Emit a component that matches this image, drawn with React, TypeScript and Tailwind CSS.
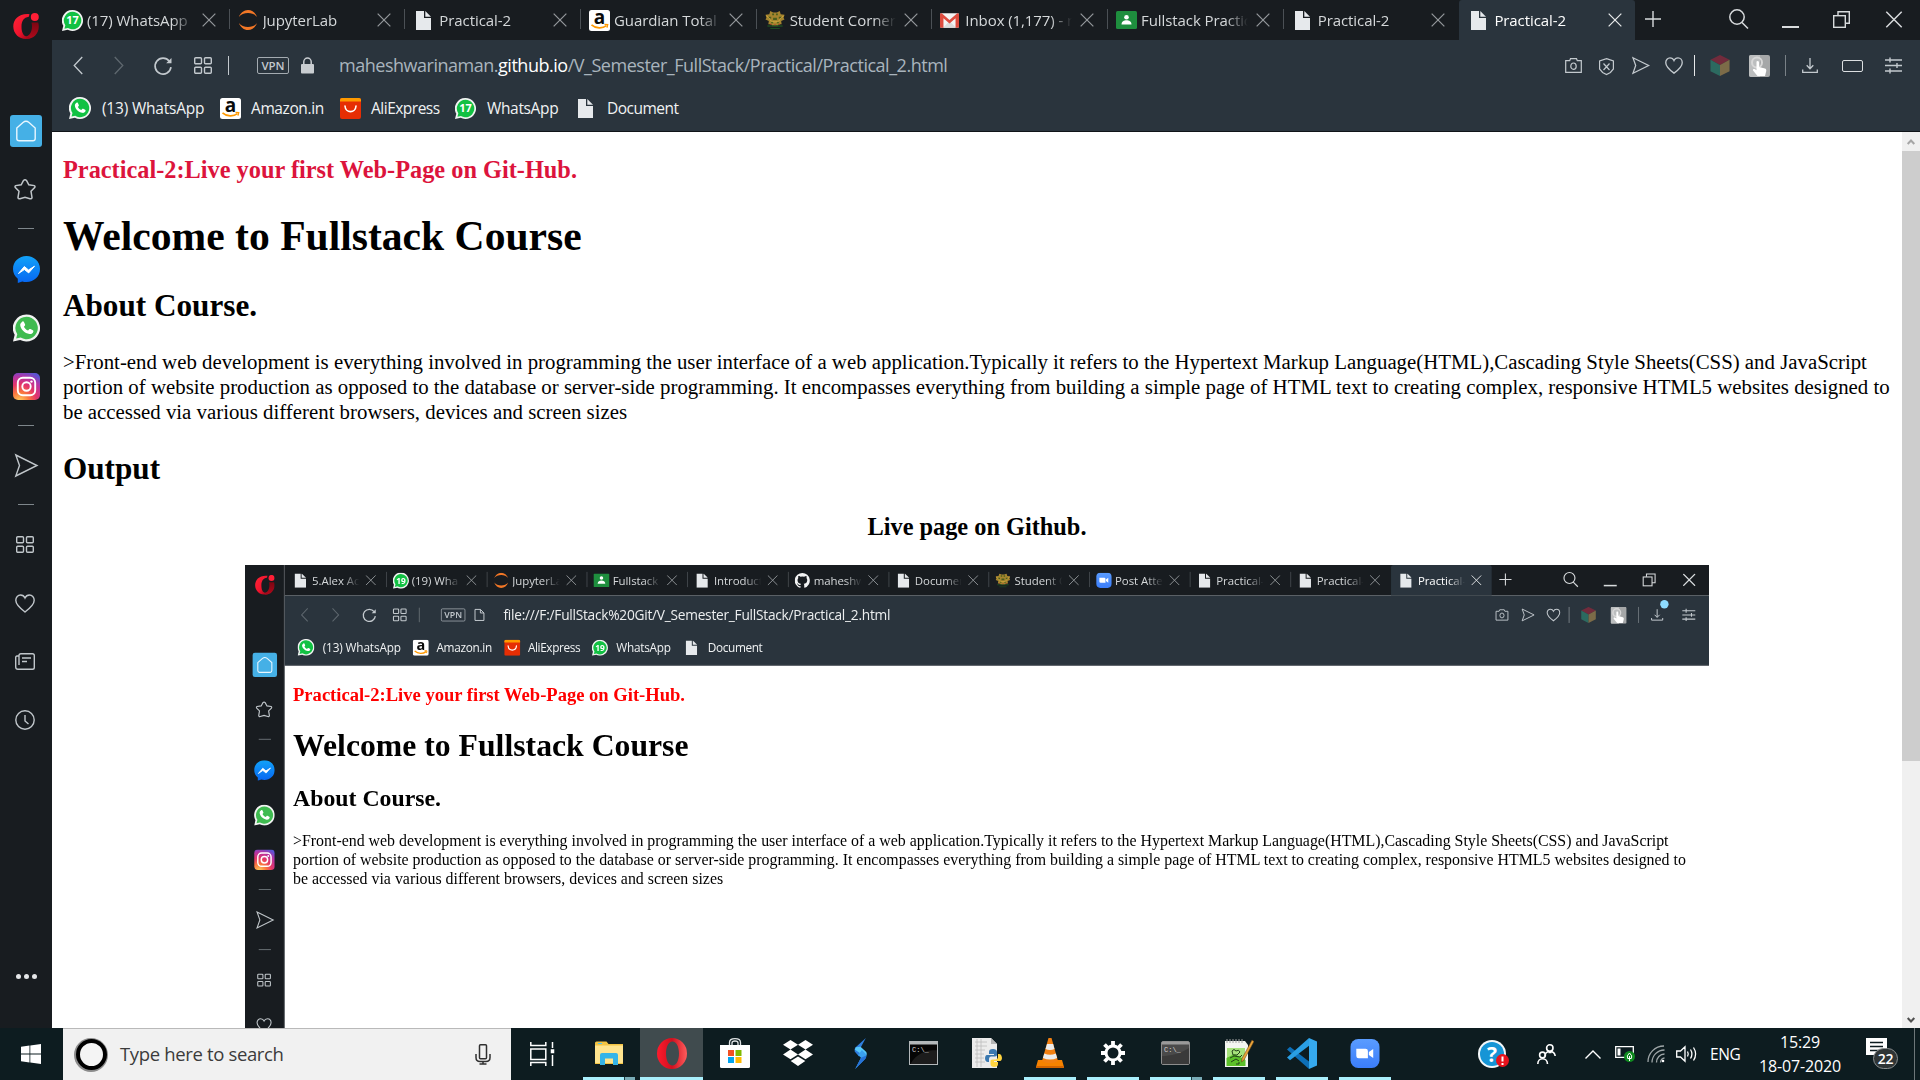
import React from "react";

type P = { className?: string };

const UI = "font-['Open_Sans','Noto_Sans',sans-serif]";

/* ---------- icons ---------- */
const OperaGX = ({ className = "" }: P) => (
  <svg viewBox="0 0 26 26" className={className}>
    <defs>
      <linearGradient id="gx" x1="0" y1="0" x2="1" y2="1">
        <stop offset="0" stopColor="#ff2436" />
        <stop offset=".55" stopColor="#f0142e" />
        <stop offset="1" stopColor="#8c0414" />
      </linearGradient>
      <linearGradient id="gx2" x1="0" y1="0" x2="0" y2="1">
        <stop offset="0" stopColor="#7c0512" />
        <stop offset="1" stopColor="#b00a1c" />
      </linearGradient>
    </defs>
    <path fill="url(#gx2)" d="M18.500 9.500h6.700c.4 1.300.6 2.600.6 4C25.800 20.500 20.500 26 13.500 26l-.5-2.500c3.800-1 6-5 6-10 0-1.500-.2-2.800-.5-4Z" />
    <path fill="url(#gx)" d="M16.500 1.200C6 .2.300 6.500.3 13.500.3 20.500 6 26 13 26c1.500 0 3-.3 4.300-.8-1.300-1-2.600-1.500-4-1.700-3-.6-4.800-4.500-4.800-9.700 0-5.800 2.300-9.300 7.300-10Z" />
    <circle cx="21.800" cy="4" r="4" fill="#ff1f36" />
  </svg>
);
const WhatsApp = ({ className = "", n, flat }: P & { n?: string; flat?: boolean }) => (
  <svg viewBox="0 0 24 24" className={className}>
    <path fill="#f1f3f2" d="M12 0a12 12 0 1 1-5.600 22.600L0 24l1.500-6A12 12 0 0 1 12 0Z" />
    <path fill={flat ? "#3fbb50" : "#12c143"} d="M12 2a10 10 0 1 1-5.200 18.500L2.800 21.400l1-3.900A10 10 0 0 1 12 2Z" />
    {n ? (
      <text x="12" y="16.500" textAnchor="middle" fontSize="12.500" fontWeight="700" fill="#fff" fontFamily="Open Sans">{n}</text>
    ) : (
      <path fill="#fff" d="M8.200 6.400c.5-.5 1.200-.4 1.500.2l1 2c.2.500.1.900-.2 1.300l-.8.9c.9 1.700 2 2.700 3.700 3.500l1-1.100c.3-.4.7-.5 1.100-.3l2.100 1c.5.2.6.600.5 1.100-.4 1.700-2 2.500-3.500 2.300-4.200-.6-8-4.300-8.200-8 0-1.200.8-2.200 1.800-2.900Z" />
    )}
  </svg>
);
const Jupyter = ({ className = "" }: P) => (
  <svg viewBox="0 0 24 24" className={className} fill="#f37726">
    <path d="M1 8.500C3 3.500 7 0 12 0s9 3.500 11 8.500C20.500 5.300 16.500 3.700 12 3.700S3.500 5.300 1 8.500Z" />
    <path d="M1 15.500C3 20.500 7 24 12 24s9-3.500 11-8.500c-2.500 3.200-6.500 4.800-11 4.800S3.500 18.700 1 15.500Z" />
  </svg>
);
const Doc = ({ className = "" }: P) => (
  <svg viewBox="0 0 15 19" className={className}>
    <path fill="#e6e9ec" d="M0 0h8v7h7v12H0Z" />
    <path fill="#e6e9ec" d="M9.300 0 15 5.700H9.300Z" />
  </svg>
);
const Amazon = ({ className = "" }: P) => (
  <svg viewBox="0 0 21 21" className={className}>
    <rect width="21" height="21" rx="2.500" fill="#fff" />
    <text x="10.500" y="13.800" textAnchor="middle" fontSize="19" fontWeight="700" fill="#0a0a0a" fontFamily="Open Sans">a</text>
    <path d="M2.500 14.800c4.500 4 11 4 15 .8" fill="none" stroke="#f90" strokeWidth="1.700" />
    <path d="M15.500 14.400l3.200.2-.7 3" fill="none" stroke="#f90" strokeWidth="1.300" />
  </svg>
);
const Ali = ({ className = "" }: P) => (
  <svg viewBox="0 0 21 21" className={className}>
    <rect width="21" height="21" rx="2" fill="#e62e04" />
    <path d="M0 3.500V2a2 2 0 0 1 2-2h17a2 2 0 0 1 2 2v1.500Z" fill="#ff9a00" />
    <path d="M5 8c.5 7.500 10.500 7.500 11 0" fill="none" stroke="#fff" strokeWidth="1.600" strokeLinecap="round" />
  </svg>
);
const Crest = ({ className = "" }: P) => (
  <svg viewBox="0 0 20 20" className={className}>
    <path fill="#a5852f" d="M5 0 8 1.500h4L15 0l1 3.500 4 .5-1 3 1 2-3.500 1.500L17 14h-3l-1 2H7l-1-2H3l.5-3.500L0 9l1-2-1-3 4-.5Z" />
    <path d="M7 2.500h2v2H7zM11 2.500h2v2h-2zM3 6h3v2H3zM14 6h3v2h-3zM8 7h4v2.500H8zM6 11h2v2H6zM12 11h2v2h-2z" fill="#4c5f1c" />
    <path d="M5 10c2 2 8 2 10 0M1 5l4 4M19 5l-4 4" stroke="#d8ac40" fill="none" />
    <path d="M2 15h16v1.500H2zM5 18h10v1H5z" fill="#1d4a22" />
    <path d="M5 13.500h1.200v1H5zM9.300 14h1.400v1H9.300zM14 13.500h1.200v1H14z" fill="#c03a2b" />
  </svg>
);
const Gmail = ({ className = "" }: P) => (
  <svg viewBox="0 0 22 17" className={className}>
    <rect width="22" height="17" rx="1.500" fill="#f4f4f4" />
    <path d="M3.500 17 11 9l7.500 8Z" fill="#dcdcdc" />
    <path d="M0 1.500C0 .5 1 0 2 0l9 8 9-8c1 0 2 .5 2 1.500v14c0 1-.7 1.500-1.500 1.500H18V6l-7 6-7-6v11H1.500C.7 17 0 16.500 0 15.500Z" fill="#dd4b3e" />
  </svg>
);
const Classroom = ({ className = "" }: P) => (
  <svg viewBox="0 0 21 18" className={className}>
    <rect width="21" height="18" rx="1.500" fill="#1e8e3e" />
    <circle cx="10.500" cy="6.200" r="2.300" fill="#fff" />
    <path d="M5.500 13.500c0-3 2.500-4.300 5-4.300s5 1.300 5 4.300Z" fill="#fff" />
  </svg>
);
const Octo = ({ className = "" }: P) => (
  <svg viewBox="0 0 24 24" className={className}>
    <path fill="#f2f3f4" d="M12 .5a12 12 0 0 0-3.800 23.400c.6.1.8-.3.8-.6v-2.100c-3.300.7-4-1.600-4-1.600-.5-1.400-1.300-1.800-1.300-1.800-1.100-.7.100-.7.100-.7 1.200.1 1.800 1.200 1.800 1.200 1.100 1.800 2.800 1.300 3.500 1 .1-.8.400-1.300.8-1.600-2.700-.3-5.500-1.300-5.500-5.900 0-1.300.5-2.400 1.200-3.200-.1-.3-.5-1.500.1-3.200 0 0 1-.3 3.300 1.200a11.500 11.500 0 0 1 6 0c2.300-1.500 3.300-1.200 3.300-1.200.7 1.700.2 2.900.1 3.200.8.800 1.200 1.900 1.200 3.200 0 4.600-2.800 5.600-5.500 5.900.4.4.8 1.100.8 2.200v3.300c0 .3.200.7.800.6A12 12 0 0 0 12 .5Z" />
  </svg>
);
const ZoomApp = ({ className = "" }: P) => (
  <svg viewBox="0 0 30 30" className={className}>
    <defs>
      <linearGradient id="zm" x1="0" y1="0" x2="0" y2="1">
        <stop offset="0" stopColor="#5a9cff" />
        <stop offset="1" stopColor="#3b7dfa" />
      </linearGradient>
    </defs>
    <rect width="30" height="30" rx="8" fill="url(#zm)" />
    <path d="M6 10h9.500a2.500 2.500 0 0 1 2.500 2.500V20H8.500A2.500 2.500 0 0 1 6 17.500ZM19 13.500l4.500-3.200v9.400L19 16.500Z" fill="#fff" />
  </svg>
);
const Cross = ({ className = "" }: P) => (
  <svg viewBox="0 0 15 15" className={className}>
    <path d="M.7.7l13.600 13.600M14.300.7.7 14.300" stroke="currentColor" strokeWidth="1.300" fill="none" />
  </svg>
);
const Line = ({ className = "", box, d, w = 1.4, children }: P & { box: string; d?: string; w?: number; children?: React.ReactNode }) => (
  <svg viewBox={box} className={"shrink-0 overflow-visible " + className} fill="none" stroke="currentColor" strokeWidth={w}>
    {d && <path d={d} />}
    {children}
  </svg>
);
const SEND = "M.8 1 22 11.500.8 22 4.500 11.500Z";
const HEART = "M10 18C4 13.500.8 10.500.8 6.300.8 3.200 3 1 5.500 1 7.500 1 9.200 2.200 10 4c.8-1.800 2.500-3 4.500-3 2.500 0 4.700 2.200 4.700 5.300C19.200 10.500 16 13.500 10 18Z";
const Grid4 = ({ className = "" }: P) => (
  <Line box="0 0 18 17" className={className}>
    <rect x=".7" y=".7" width="6.800" height="6" rx="1" />
    <rect x="10.500" y=".7" width="6.800" height="6" rx="1" />
    <rect x=".7" y="10.200" width="6.800" height="6" rx="1" />
    <rect x="10.500" y="10.200" width="6.800" height="6" rx="1" />
  </Line>
);
const Messenger = ({ className = "" }: P) => (
  <svg viewBox="0 0 27 27" className={className}>
    <defs>
      <linearGradient id="ms" x1="0" y1="0" x2="0" y2="1">
        <stop offset="0" stopColor="#12a2f8" />
        <stop offset="1" stopColor="#0666f2" />
      </linearGradient>
    </defs>
    <path d="M13.500 0C21 0 27 5.500 27 13s-6 13-13.500 13c-1.500 0-3-.2-4.200-.6L4.800 27v-4.300C1.800 20.300 0 17 0 13 0 5.500 6 0 13.500 0Z" fill="url(#ms)" />
    <path d="M5.500 17.500 11.300 10.500 15.500 14l6-3.800-5.800 6.700-4.300-3.400Z" fill="#fff" stroke="#fff" strokeWidth="1" strokeLinejoin="round" />
  </svg>
);
const Insta = ({ className = "" }: P) => (
  <svg viewBox="0 0 27 27" className={className}>
    <defs>
      <radialGradient id="ig" cx=".25" cy="1.050" r="1.150">
        <stop offset="0" stopColor="#ffd35e" />
        <stop offset=".3" stopColor="#f9763e" />
        <stop offset=".55" stopColor="#e3356a" />
        <stop offset=".8" stopColor="#b434a6" />
        <stop offset="1" stopColor="#5b54d3" />
      </radialGradient>
    </defs>
    <rect width="27" height="27" rx="5" fill="url(#ig)" />
    <rect x="4.800" y="4.800" width="17.400" height="17.400" rx="5" fill="none" stroke="#fff" strokeWidth="1.900" />
    <circle cx="13.500" cy="13.500" r="4.200" fill="none" stroke="#fff" strokeWidth="1.900" />
    <circle cx="18.500" cy="8.600" r="1.200" fill="#fff" />
  </svg>
);
const Cube = ({ className = "" }: P) => (
  <svg viewBox="0 0 20 22" className={className}>
    <path d="M10 0l10 5-10 5.500L0 5Z" fill="#722b3c" />
    <path d="M0 5l10 5.500V22L0 17Z" fill="#2c6a60" />
    <path d="M20 5l-10 5.500V22l10-5Z" fill="#7c6b48" />
  </svg>
);
const Hand = ({ className = "" }: P) => (
  <svg viewBox="0 0 21 22" className={className}>
    <rect width="21" height="22" rx="2" fill="#a5a7a8" />
    <path d="M0 2a2 2 0 0 1 2-2h9v22H2a2 2 0 0 1-2-2Z" fill="#bcbebf" />
    <circle cx="8" cy="7.500" r="5" fill="none" stroke="#d8d8d8" strokeWidth="2" />
    <path d="M7.500 6.500c1-1 2.500-.5 2.500 1V12l6 1.500c1.500.5 1.500 2 1 3.500l-1 4H8.500L4 15.500c-.6-1.400 1-2 2-1.200l1.500 1Z" fill="#fff" />
  </svg>
);

/* ---------- browser chrome ---------- */
type Tab = { icon: string; label: string; active?: boolean };
const isWide = (i: string) => i !== "doc";
function Fav({ kind, n }: { kind: string; n: string }) {
  switch (kind) {
    case "wa": return <WhatsApp n={n} className="w-[21px] h-[21px]" />;
    case "jup": return <Jupyter className="w-[20px] h-[20px]" />;
    case "amz": return <Amazon className="w-[21px] h-[21px]" />;
    case "crest": return <Crest className="w-[20px] h-[19px]" />;
    case "gm": return <Gmail className="w-[19px] h-[15px]" />;
    case "cls": return <Classroom className="w-[21px] h-[18px]" />;
    case "oct": return <Octo className="w-[20px] h-[20px]" />;
    case "zm": return <ZoomApp className="w-[21px] h-[20px]" />;
    default: return <Doc className="w-[15px] h-[19px]" />;
  }
}

function TabStrip({ tabs, n }: { tabs: Tab[]; n: string }) {
  return (
    <div className="flex h-[40px] bg-[#181c20] pl-px text-[#d5d8da]">
      <div className="flex w-[1582px]">
        {tabs.map((t, i) => (
          <div
            key={i}
            className={
              "relative flex min-w-0 flex-1 items-center pr-[13px] " +
              (t.active ? "ml-px rounded-t-[3px] bg-[#2a343d] text-white" : "")
            }
          >
            {i > 0 && !t.active && <div className="absolute top-[9px] left-0 h-[20px] w-px bg-[#4b5055]" />}
            <div className={"flex h-full shrink-0 items-center " + (isWide(t.icon) ? "w-[34px] pl-[9px]" : "w-[35px] pl-[12px]")}>
              <Fav kind={t.icon} n={n} />
            </div>
            <div className={"min-w-0 flex-1 overflow-hidden pb-px text-[15px] leading-[24px] tracking-[-0.08px] whitespace-nowrap [mask-image:linear-gradient(to_right,black_calc(100%-22px),transparent)] " + UI}>
              {t.label}
            </div>
            <Cross className={"ml-[8px] h-[14px] w-[14px] shrink-0 " + (t.active ? "text-[#e8eaeb]" : "text-[#94989b]")} />
          </div>
        ))}
      </div>
      <div className="flex flex-1 items-start text-[#d8dbdd]">
        <Line box="0 0 16 16" d="M8 0v16M0 8h16" className="mt-[11px] ml-[10px] h-[16px] w-[16px]" />
        <Line box="0 0 20 20" w={1.5} className="mt-[9px] ml-[68px] h-[20px] w-[20px]">
          <circle cx="8" cy="8" r="7.200" />
          <path d="M13 13.500l6 6" />
        </Line>
        <div className="mt-[26px] ml-[33px] h-[1.500px] w-[17px] bg-[#d8dbdd]" />
        <Line box="0 0 17 17" className="mt-[11px] ml-[34px] h-[17px] w-[17px]">
          <rect x=".7" y="4.700" width="11.600" height="11.600" />
          <path d="M5 4.500V.7h11.300v11.600h-4" />
        </Line>
        <Cross className="mt-[11px] ml-[35px] h-[17px] w-[18px]" />
      </div>
    </div>
  );
}

const Camera = ({ className = "" }: P) => (
  <Line box="0 0 17 15" w={1.2} className={className}>
    <path d="M.7 2.700h4L5.500.7h6l.8 2h4v11.600H.7Z" />
    <ellipse cx="8.500" cy="8.200" rx="2.700" ry="3.200" />
  </Line>
);
const Sliders = ({ className = "" }: P) => (
  <Line box="0 0 17 15" w={1.4} className={className} d="M0 2h17M0 7.500h17M0 13h17M5-.5v5M12 5v5M5 10.500v5" />
);
const Download = ({ className = "" }: P) => (
  <Line box="0 0 16 15" w={1.3} className={className} d="M8 0v10.500M4.700 7.300 8 10.700l3.300-3.400M.7 11.500v2.800h14.600v-2.800" />
);

function Toolbar({ inner }: { inner?: boolean }) {
  return (
    <div className="flex h-[51px] items-center text-[#c3c9ce]">
      <Line box="0 0 10 18" d="M9.500 0 1 9l8.500 9" className={"ml-[21px] h-[17px] w-[10px] " + (inner ? "text-[#5e676e]" : "")} />
      <Line box="0 0 10 18" d="M.5 0 9 9 .5 18" className="ml-[31px] h-[17px] w-[10px] text-[#5e676e]" />
      <Line box="0 0 17 17" w={1.6} className="ml-[30px] h-[18px] w-[18px]">
        <path d="M14.500 4A7.500 7.500 0 1 0 16 9.500" />
        <path d="M16.500 1v5h-5Z" fill="currentColor" stroke="none" />
      </Line>
      <Grid4 className="ml-[22px] h-[17px] w-[18px]" />
      <div className={"ml-[16px] h-[19px] w-px " + (inner ? "bg-[#70787e]" : "bg-[#c3c9ce]")} />
      <div className={"ml-[28px] flex h-[17px] w-[32px] items-center justify-center rounded-[2px] border border-[#a4abb1] text-[11.500px] leading-none font-semibold " + UI}>VPN</div>
      {inner ? (
        <Line box="0 0 14 17" className="ml-[12px] h-[17px] w-[13px]" d="M.7.7h7.600l5 5v10.600H.7ZM8.300.7v5h5" />
      ) : (
        <svg viewBox="0 0 14 17" className="ml-[12px] h-[17px] w-[13px]">
          <rect y="7" width="14" height="10" rx="1" fill="#c9cdd1" />
          <path d="M3 8V4.500a4 4 0 0 1 8 0V8" fill="none" stroke="#c9cdd1" strokeWidth="1.600" />
        </svg>
      )}
      <div className={"ml-[25px] w-[900px] pb-px text-[18px] leading-[26px] whitespace-nowrap " + UI + (inner ? " tracking-[-0.34px] text-[#eceeef]" : " tracking-[-0.48px] text-[#a9b4bd]")}>
        {inner ? (
          "file:///F:/FullStack%20Git/V_Semester_FullStack/Practical_2.html"
        ) : (
          <>maheshwarinaman.<span className="text-white">github.io</span>/V_Semester_FullStack/Practical/Practical_2.html</>
        )}
      </div>
      <div className="flex-1" />
      <Camera className="h-[15px] w-[17px]" />
      {!inner && (
        <Line box="0 0 15 17" w={1.2} className="mt-[2px] ml-[17px] h-[17px] w-[15px]" d="M7.500.6 14.400 3v8l-3 3.500-3.900 2-3.900-2-3-3.500V3ZM4.500 5.500l6 6.500M10.500 5.500l-6 6.500" />
      )}
      <Line box="0 0 22 23" w={1.7} d={SEND} className={"h-[17px] w-[17px] " + (inner ? "ml-[17px]" : "ml-[18px]")} />
      <Line box="0 0 20 19" w={1.5} d={HEART} className="ml-[16px] h-[17px] w-[18px]" />
      <div className={"ml-[11px] h-[21px] w-px " + (inner ? "bg-[#8b9298]" : "bg-[#e6e8ea]")} />
      <Cube className="ml-[15px] h-[21px] w-[20px]" />
      <Hand className="ml-[19px] h-[22px] w-[21px]" />
      <div className="ml-[15px] h-[21px] w-px bg-[#798187]" />
      <div className="relative ml-[16px]">
        <Download className="h-[15px] w-[16px]" />
        {inner && <div className="absolute -top-[12px] left-[12px] h-[11px] w-[11px] rounded-full bg-[#8edcff]" />}
      </div>
      {!inner && <div className="ml-[24px] h-[12px] w-[21px] rounded-[2px] border-[1.500px] border-[#dcdfe1]" />}
      <Sliders className={"mr-[18px] h-[15px] w-[17px] " + (inner ? "ml-[25px]" : "ml-[22px]")} />
    </div>
  );
}

function Bookmarks({ n }: { n: string }) {
  const t = "pb-px text-[15.500px] leading-[22px] whitespace-nowrap text-[#f0f2f3] " + UI;
  return (
    <div className="flex h-[34px] items-center">
      <div className="ml-[17px] w-[33px]"><WhatsApp className="h-[22px] w-[22px]" /></div>
      <div className={t + " w-[118px] tracking-[-0.2px]"}>(13) WhatsApp</div>
      <div className="w-[31px]"><Amazon className="h-[21px] w-[21px]" /></div>
      <div className={t + " w-[89px] tracking-[-0.4px]"}>Amazon.in</div>
      <div className="w-[31px]"><Ali className="h-[21px] w-[21px]" /></div>
      <div className={t + " w-[84px] tracking-[-0.5px]"}>AliExpress</div>
      <div className="w-[32px]"><WhatsApp n={n} className="h-[21px] w-[21px]" /></div>
      <div className={t + " w-[91px] tracking-[-0.35px]"}>WhatsApp</div>
      <div className="w-[29px]"><Doc className="h-[19px] w-[15px]" /></div>
      <div className={t + " tracking-[-0.5px]"}>Document</div>
    </div>
  );
}

function SideBar({ inner }: { inner?: boolean }) {
  const dash = <div className="h-px w-[16px] bg-[#7e868b]" />;
  const slot = "flex items-center justify-center ";
  return (
    <div className={"flex w-[52px] shrink-0 flex-col items-center bg-[#181c20] text-[#c0c6ca] " + (inner ? "border-r border-[#6a6f73]" : "")}>
      <OperaGX className="mt-[13px] h-[26px] w-[26px]" />
      <div className={slot + "mt-[76px] h-[32px] w-[32px] rounded-[3px] bg-[#45b0e6] text-[#e9f7ff]"}>
        <Line box="0 0 20 21" className="h-[22px] w-[20px]" d="M.8 7.500 7 2Q10-.4 13 2l6.200 5.500V18q0 2.300-2.300 2.300H3.100Q.8 20.300.8 18Z" />
      </div>
      <Line box="0 0 22 21" w={1.5} className="mt-[32px] mr-[2px] h-[21px] w-[22px]" d="M9.500 1.500q1.500-1.500 3 0l2.300 4.300 5.400.8q1.300.8.500 2L17 12.300l1 6.200q-.3 1.700-2 1.200L11 18.200l-5 1.500q-1.700.5-2-1.200l1-6.200L1.300 8.600q-.8-1.200.5-2l5.400-.8Z" />
      <div className="mt-[28px]">{dash}</div>
      <Messenger className="mt-[27px] h-[27px] w-[27px]" />
      <WhatsApp flat className="mt-[31px] h-[28px] w-[27px]" />
      <Insta className="mt-[31px] h-[27px] w-[27px]" />
      <div className="mt-[25px]">{dash}</div>
      <Line box="0 0 22 23" d={SEND} className="mt-[28px] h-[23px] w-[22px]" />
      <div className="mt-[27px]">{dash}</div>
      <Grid4 className="mt-[31px] mr-[2px] h-[17px] w-[18px]" />
      <Line box="0 0 20 19" d={HEART} className="mt-[41px] mr-[2px] h-[19px] w-[20px]" />
      <Line box="0 0 20 17" className="mt-[40px] mr-[2px] h-[17px] w-[20px]" d="M4 3H2Q.7 3 .7 4.500V14q0 2.300 2.300 2.300h14.500q1.800 0 1.800-1.800V2.500Q19.300.7 17.500.7H6Q4 .7 4 2.500V12M7 5h9M7 8.500h5" />
      <Line box="0 0 20 20" className="mt-[40px] mr-[2px] h-[20px] w-[20px]">
        <circle cx="10" cy="10" r="9.200" />
        <path d="M10 5v6l3.500 3" />
      </Line>
      <div className="mt-[244px] flex gap-[3px]">
        <div className="h-[5px] w-[5px] rounded-full bg-[#e4e6e8]" />
        <div className="h-[5px] w-[5px] rounded-full bg-[#e4e6e8]" />
        <div className="h-[5px] w-[5px] rounded-full bg-[#e4e6e8]" />
      </div>
    </div>
  );
}

function Article({ inner }: { inner?: boolean }) {
  return (
    <>
      <h3 className={"mt-[24px] text-[24.340px] leading-[28px] font-bold " + (inner ? "text-[#ff0000]" : "text-[#dc143c]")}>Practical-2:Live your first Web-Page on Git-Hub.</h3>
      <h1 className="mt-[28px] text-[41.600px] leading-[48px] font-bold">Welcome to Fullstack Course</h1>
      <h2 className="mt-[28px] text-[31.200px] leading-[36px] font-bold">About Course.</h2>
      <div className="mt-[26px] text-[20.840px] leading-[25px] whitespace-nowrap">
        <p>&gt;Front-end web development is everything involved in programming the user interface of a web application.Typically it refers to the Hypertext Markup Language(HTML),Cascading Style Sheets(CSS) and JavaScript</p>
        <p>portion of website production as opposed to the database or server-side programming. It encompasses everything from building a simple page of HTML text to creating complex, responsive HTML5 websites designed to</p>
        <p>be accessed via various different browsers, devices and screen sizes</p>
      </div>
    </>
  );
}

const innerTabs: Tab[] = [
  { icon: "doc", label: "5.Alex Ac" },
  { icon: "wa", label: "(19) Wha" },
  { icon: "jup", label: "JupyterLa" },
  { icon: "cls", label: "Fullstack" },
  { icon: "doc", label: "Introduct" },
  { icon: "oct", label: "maheshw" },
  { icon: "doc", label: "Documen" },
  { icon: "crest", label: "Student C" },
  { icon: "zm", label: "Post Atte" },
  { icon: "doc", label: "Practical-" },
  { icon: "doc", label: "Practical-" },
  { icon: "doc", label: "Practical-", active: true },
];
const outerTabs: Tab[] = [
  { icon: "wa", label: "(17) WhatsApp" },
  { icon: "jup", label: "JupyterLab" },
  { icon: "doc", label: "Practical-2" },
  { icon: "amz", label: "Guardian Total S" },
  { icon: "crest", label: "Student Corner" },
  { icon: "gm", label: "Inbox (1,177) - n" },
  { icon: "cls", label: "Fullstack Practic" },
  { icon: "doc", label: "Practical-2" },
  { icon: "doc", label: "Practical-2", active: true },
];

function Browser({ inner }: { inner?: boolean }) {
  const n = inner ? "19" : "17";
  return (
    <div className="flex h-[1028px] w-[1920px] overflow-hidden bg-white">
      <SideBar inner={inner} />
      <div className="flex min-w-0 flex-1 flex-col">
        <TabStrip tabs={inner ? innerTabs : outerTabs} n={n} />
        <div className={"h-[92px] border-b bg-[#2a343d] " + (inner ? "border-[#5a5f64]" : "border-[#101418]")}>
          <Toolbar inner={inner} />
          <Bookmarks n={n} />
        </div>
        <div className="flex min-h-0 flex-1">
          <div className="min-w-0 flex-1 overflow-hidden pl-[11px] font-['Liberation_Serif',serif] text-black">
            <Article inner={inner} />
            {!inner && (
              <>
                <h2 className="mt-[26px] text-[31.200px] leading-[36px] font-bold">Output</h2>
                <h3 className="mt-[26px] mr-[11px] text-center text-[24.340px] leading-[28px] font-bold">Live page on Github.</h3>
                <div className="mt-[24px] ml-[182px] h-[500px] w-[1464px] overflow-hidden">
                  <div className="origin-top-left scale-[0.7625]">
                    <Browser inner />
                  </div>
                </div>
              </>
            )}
          </div>
          {!inner && (
            <div className="flex w-[18px] flex-col items-center bg-[#f0f0f0]">
              <Line box="0 0 8 6" w={2} d="M.7 5 4 1.500 7.300 5" className="mt-[7px] h-[6px] w-[8px] text-[#a6a6a6]" />
              <div className="mt-[6px] h-[610px] w-full bg-[#cdcdcd]" />
              <div className="flex-1" />
              <Line box="0 0 8 6" w={2} d="M.7 1 4 4.500 7.300 1" className="mb-[5px] h-[6px] w-[8px] text-[#505050]" />
            </div>
          )}
        </div>
      </div>
    </div>
  );
}

/* ---------- taskbar ---------- */
function Cell({ children, bar, active, split }: { children: React.ReactNode; bar?: boolean; active?: boolean; split?: boolean }) {
  return (
    <div className={"flex w-[63px] shrink-0 flex-col items-center " + (active ? "bg-[#404b4e]" : "")}>
      <div className="flex h-[49px] w-full items-center justify-center pt-px">{children}</div>
      {bar && (
        <div className={"flex h-[3px] bg-[#a9effc] " + (active ? "w-full" : "w-[52px]")}>
          {split && <div className="ml-auto h-full w-[11px] border-l border-[#1b3a40] bg-[#79acb7]" />}
        </div>
      )}
    </div>
  );
}
const Cmd = ({ grey }: { grey?: boolean }) => (
  <svg viewBox="0 0 29 24" className="h-[24px] w-[29px]">
    <rect x=".5" y=".5" width="28" height="23" rx={grey ? 1.5 : 0} fill={grey ? "#4a4a4a" : "#050505"} stroke={grey ? "#8d8d8d" : "#b3b8ba"} />
    <rect x="1" y="1" width="27" height="2.500" fill={grey ? "#9a9a9a" : "#b3b8ba"} />
    {!grey && <path d="M28 4v19H1.500C7 13 16 9 28 9Z" fill="#1c1c1c" />}
    {grey && <path d="M1 23V15c8 0 18-2 27-8v16Z" fill="#3a3a3a" />}
    <text x="3" y="10.500" fontSize="7" fill="#d5d5d5" fontFamily="Liberation Mono">C:\_</text>
  </svg>
);

function Taskbar() {
  return (
    <div className={"flex h-[52px] w-[1920px] bg-[#0d1c20] text-white " + UI}>
      <div className="flex w-[63px] items-center justify-center">
        <svg viewBox="0 0 20 20" className="mr-[2px] h-[20px] w-[20px]" fill="#fff">
          <path d="M0 2.800 8.500 1.600v8H0ZM9.300 1.500 20 0v9.600H9.300ZM0 10.400h8.500v8L0 17.200ZM9.300 10.400H20V20L9.300 18.500Z" />
        </svg>
      </div>
      <div className="flex w-[448px] items-center border-t border-[#b9b9b9] bg-[#f1f1f1]">
        <div className="ml-[11px] flex h-[34px] w-[34px] items-center justify-center rounded-full bg-[#8c8c8c]">
          <div className="h-[31px] w-[31px] rounded-full border-[4px] border-black bg-[#f4f4f4]" />
        </div>
        <div className="ml-[12px] pb-[2px] text-[18.500px] leading-[26px] tracking-[-0.35px] whitespace-nowrap text-[#3b3b3b]">Type here to search</div>
        <div className="flex-1" />
        <Line box="0 0 16 21" w={1.5} className="mr-[20px] h-[21px] w-[16px] text-[#303030]">
          <rect x="4.500" y=".8" width="7" height="14" rx="1" />
          <path d="M1 10v3.500q0 4 4 4h6q4 0 4-4V10M8 17.500V20M4.500 20h7" />
        </Line>
      </div>
      <div className="flex w-[66px] items-center justify-center pr-[4px]">
        <Line box="0 0 24 24" w={1.500} className="h-[24px] w-[24px]" d="M.8 0v3.500h15V0M.8 7h15v10.500h-15ZM.8 24v-3.500h15V24M22.500 0v6M22.500 13v11">
          <rect x="21.500" y="8" width="2" height="2.500" fill="#fff" />
        </Line>
      </div>
      <Cell bar split>
        <svg viewBox="0 0 28 24" className="h-[24px] w-[28px]">
          <path d="M0 2q0-1.500 1.500-1.500h10l2 2.500H28v20H0Z" fill="#f3c443" />
          <path d="M0 4.500h28V21q0 1-1 1H1q-1 0-1-1Z" fill="#ffe48e" />
          <path d="M3 2.500h4" stroke="#4fc3f7" />
          <path d="M5 24V14q0-2 2-2h14q2 0 2 2v10h-5v-6.500h-8V24Z" fill="#35b4e8" />
        </svg>
      </Cell>
      <Cell bar active>
        <svg viewBox="0 0 30 31" className="h-[31px] w-[30px]">
          <defs>
            <linearGradient id="op" x1="0" y1="0" x2="1" y2="0">
              <stop offset="0" stopColor="#ff1b2d" />
              <stop offset=".5" stopColor="#d0101f" />
              <stop offset="1" stopColor="#ff5c5c" />
            </linearGradient>
          </defs>
          <path fillRule="evenodd" fill="url(#op)" d="M15 0a15 15.500 0 0 1 0 31a15 15.500 0 0 1 0-31ZM15.500 3.500C11.500 3.500 9 9 9 15.500s2.500 12 6.500 12S22 22 22 15.500 19.500 3.500 15.500 3.500Z" />
        </svg>
      </Cell>
      <Cell>
        <svg viewBox="0 0 30 30" className="h-[30px] w-[30px]">
          <path d="M9.500 8V4.500q0-3.800 5.500-3.800t5.500 3.800V8M12 8V5q0-2 3-2t3 2v3" fill="none" stroke="#dfe3e4" strokeWidth="1.300" />
          <path d="M0 7h30v21.500q0 1.500-1.500 1.500h-27Q0 30 0 28.500Z" fill="#fff" />
          <path d="M8 12h6v6H8Z" fill="#f25022" /><path d="M15.500 12h6v6h-6Z" fill="#7fba00" />
          <path d="M8 19h6v6H8Z" fill="#00a4ef" /><path d="M15.500 19h6v6h-6Z" fill="#ffb900" />
        </svg>
      </Cell>
      <Cell>
        <svg viewBox="0 0 30 26" className="h-[26px] w-[30px]" fill="#fff">
          <path d="M7.500 0 15 4.800 7.500 9.600 0 4.800ZM22.500 0 30 4.800l-7.500 4.800L15 4.800ZM7.500 9.600l7.500 4.800-7.500 4.800L0 14.400ZM22.500 9.600l7.500 4.800-7.500 4.800-7.500-4.800ZM15 16.400l7.300 4.700L15 25.900l-7.300-4.800Z" />
        </svg>
      </Cell>
      <Cell>
        <svg viewBox="0 0 15 32" className="h-[31px] w-[15px]">
          <path d="M13 0 2.500 9.500Q.5 11.500 1.500 14L6 19l4-5-3-3Z" fill="#2f7fe0" />
          <path d="M1.800 12 13 19.500Q15 17 13.500 14.500L7.500 9 2.500 9.500Z" fill="#58c8fa" />
          <path d="M2 32 12.500 21.500Q14.500 19 13 16.500L9 12.500 5 17.500l3 3Z" fill="#3aa0ee" />
          <path d="M2 32 8 20.500 13.500 18q.3 2-1 3.500Z" fill="#2672d8" />
        </svg>
      </Cell>
      <Cell><Cmd /></Cell>
      <Cell>
        <svg viewBox="0 0 30 30" className="h-[30px] w-[30px]">
          <path d="M0 0h19l6 6v24H0Z" fill="#ececec" />
          <path d="M19 0v6h6Z" fill="#b5b5b5" />
          <path d="M3 4h12M3 8h12M3 12h10M3 16h9M3 20h9M3 24h10M5 1v28M9 1v28" stroke="#bdbdbd" strokeWidth=".8" />
          <path d="M21 11c-3 0-4 1-4 3v2h5v1h-7c-2.500 0-3 7 1 7h1v-3c0-2 1.500-2.500 3-2.500h3c1.500 0 2-.8 2-2V14c0-2-1.500-3-4-3Z" fill="#3a78b0" />
          <path d="M22 29c3 0 4-1 4-3v-2h-4v-1h6c3 0 2.500-7-1-7h-1v3c0 1.500-1 2.500-2.500 2.500h-3c-1.500 0-2 .8-2 2V26c0 2 1.500 3 3.500 3Z" fill="#ffd43f" />
        </svg>
      </Cell>
      <Cell bar>
        <svg viewBox="0 0 28 30" className="h-[30px] w-[28px]">
          <path d="M2 22h24l2 7H0Z" fill="#f58200" />
          <path d="M12.500 0h3L22 23q-8 4.500-16 0Z" fill="#f28011" />
          <path d="M11 6h6.200l1.300 5q-4.500 2-9 0ZM8.300 15.500q5.700 2.500 11.500 0l1.400 4.500q-7 3-14.300 0Z" fill="#ececec" />
          <path d="M0 28h28v2H0Z" fill="#d26400" />
        </svg>
      </Cell>
      <Cell bar>
        <svg viewBox="0 0 24 24" className="h-[24px] w-[24px]">
          <g stroke="#fff" fill="none">
            <circle cx="12" cy="12" r="7" strokeWidth="3" />
            <path d="M12 0v4M12 20v4M0 12h4M20 12h4M3.500 3.500l3 3M17.500 17.500l3 3M3.500 20.500l3-3M17.500 6.500l3-3" strokeWidth="3.800" />
          </g>
        </svg>
      </Cell>
      <Cell bar split><Cmd grey /></Cell>
      <Cell bar>
        <svg viewBox="0 0 30 29" className="h-[29px] w-[30px]">
          <path d="M1 2h20l3 4v22H1Z" fill="#f3f5f0" />
          <path d="M3 9h18v18H3Z" fill="#a6e27c" />
          <path d="M2.500 27V19l8-4 11 6v6Z" fill="#5cc02a" />
          <path d="M3 0v4M6 0v4M9 0v4M12 0v4M15 0v4M18 0v4" stroke="#a0a0a0" strokeWidth="1" />
          <path d="M8 12q2-3 4 0q3-2 4 1l-3 3H9ZM6 19l4-2 6 1 2-2M7 23l5-3 3 2M12 25h3v-2" stroke="#23401a" strokeWidth="1" fill="none" />
          <path d="M28 1 30 2.500 20 21l-2.500 2 .5-3.500Z" fill="#e8a33a" stroke="#5b3a12" strokeWidth=".5" />
        </svg>
      </Cell>
      <Cell bar>
        <svg viewBox="0 0 31 31" className="h-[31px] w-[31px]">
          <path d="M23 31 1 11.500 4 8.800 23 23.500Z" fill="#0d6fb8" />
          <path d="M23 0v7.800L4 22.200 1 19.500Z" fill="#2a9fe4" />
          <path d="M23 0 31 3.500v24L23 31Z" fill="#36a9ee" />
        </svg>
      </Cell>
      <Cell bar><ZoomApp className="h-[29px] w-[30px]" /></Cell>

      <div className="ml-[82px] flex flex-1 items-center">
        <svg viewBox="0 0 31 29" className="h-[29px] w-[31px]">
          <circle cx="14" cy="14" r="14" fill="#f4f8fa" />
          <circle cx="14" cy="14" r="12" fill="#1695d6" />
          <text x="14" y="21.500" textAnchor="middle" fontSize="21" fontWeight="700" fill="#fff" fontFamily="Open Sans">?</text>
          <circle cx="24.500" cy="20.500" r="6.500" fill="#e8121c" />
          <path d="M24.500 16.500v5M24.500 23v2" stroke="#fff" strokeWidth="2" />
        </svg>
        <Line box="0 0 19 21" w={1.600} className="ml-[28px] h-[21px] w-[19px]">
          <circle cx="12.800" cy="4" r="3.200" />
          <path d="M8 12c0-6 9.500-6 10.200 0M11.500 8.500l3 0" />
          <circle cx="5.500" cy="11" r="2.900" />
          <path d="M.8 20c0-7 9.500-7 9.700 0" />
        </Line>
        <Line box="0 0 16 9" w={1.400} d="M.5 8.500 8 1l7.500 7.500" className="ml-[29px] h-[9px] w-[16px]" />
        <svg viewBox="0 0 20 16" className="ml-[14px] h-[16px] w-[20px]">
          <path d="M.7.7h17.600v10.600H.7Z" fill="none" stroke="#fff" strokeWidth="1.300" />
          <path d="M2.500 2.500h3v7h-3Z" fill="#fff" />
          <circle cx="14.500" cy="10.500" r="5.500" fill="#0f8a1f" />
          <path d="M14.500 7q3.500 3 1.800 5.500h-3.600Q11 10 14.500 7ZM14.500 10v5" fill="none" stroke="#fff" />
        </svg>
        <Line box="0 0 18 18" w={1.300} className="ml-[12px] h-[18px] w-[18px] text-[#9fa6a8]" d="M1 17C1 8 8 1 17 1M5 17.500C5 10.500 10.500 5 17.500 5M9.500 17.500c0-4.500 3.500-8.500 8-8.500M13.500 17.500c0-2.500 2-4.500 4-4.500">
          <circle cx="16" cy="16" r="1.300" fill="#fff" stroke="none" />
        </Line>
        <Line box="0 0 21 16" w={1.300} className="ml-[11px] h-[16px] w-[21px]" d="M.7 5h3.800L9 .8v14.400L4.500 11H.7ZM11.500 5.500q1.500 2.500 0 5M14.500 3.500q2.800 4.500 0 9M17.500 1.500q4.200 6.500 0 13" />
        <div className="ml-[13px] w-[32px] text-[15.500px] leading-[20px] tracking-[-0.35px]">ENG</div>
        <div className="ml-[13px] w-[90px] text-center text-[16px] leading-[24px] tracking-[-0.15px] whitespace-nowrap">
          <div>15:29</div>
          <div>18-07-2020</div>
        </div>
        <div className="relative ml-[21px] h-[32px] w-[33px]">
          <svg viewBox="0 0 21 21" className="h-[21px] w-[21px]">
            <path d="M0 0h21v17h-9l-4 4v-4H0Z" fill="#fff" />
            <path d="M4 4.500h13M4 8.500h13M4 12.500h9" stroke="#0c1b1f" strokeWidth="1.400" />
          </svg>
          <div className="absolute top-[10px] left-[7px] flex h-[21px] w-[25px] items-center justify-center rounded-full border border-[#8a8f90] bg-[#2f3536] text-[14px] leading-none font-semibold tracking-[-0.3px]">22</div>
        </div>
        <div className="ml-auto h-full w-[6px] border-l border-[#6d7679]" />
      </div>
    </div>
  );
}

export default function App() {
  return (
    <div className="flex h-[1080px] w-[1920px] flex-col overflow-hidden bg-white">
      <Browser />
      <Taskbar />
    </div>
  );
}
